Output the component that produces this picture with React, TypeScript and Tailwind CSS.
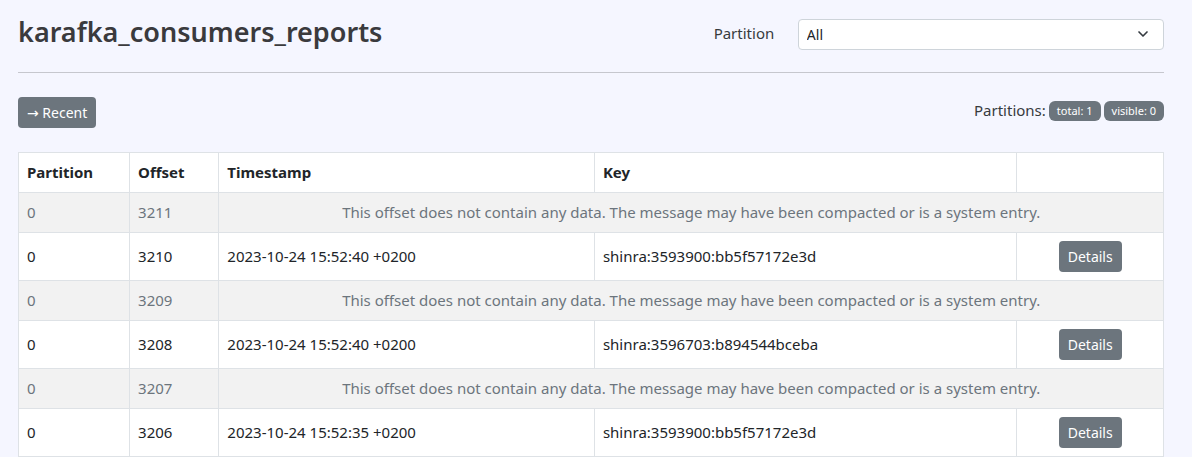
import { ChevronDown } from "lucide-react";

type Row = {
  partition: number;
  offset: number;
  timestamp?: string;
  messageKey?: string;
};

const rows: Row[] = [
  { partition: 0, offset: 3211 },
  { partition: 0, offset: 3210, timestamp: "2023-10-24 15:52:40 +0200", messageKey: "shinra:3593900:bb5f57172e3d" },
  { partition: 0, offset: 3209 },
  { partition: 0, offset: 3208, timestamp: "2023-10-24 15:52:40 +0200", messageKey: "shinra:3596703:b894544bceba" },
  { partition: 0, offset: 3207 },
  { partition: 0, offset: 3206, timestamp: "2023-10-24 15:52:35 +0200", messageKey: "shinra:3593900:bb5f57172e3d" },
];

const cell = "border border-[#dee2e6] p-2";

function MessageRow({ row }: { row: Row }) {
  if (!row.timestamp) {
    return (
      <tr className="bg-[#f2f2f2] text-[#6c757d]">
        <td className={cell}>{row.partition}</td>
        <td className={cell}>{row.offset}</td>
        <td className={`${cell} text-center`} colSpan={3}>
          This offset does not contain any data. The message may have been compacted or is a system entry.
        </td>
      </tr>
    );
  }
  return (
    <tr className="bg-white">
      <td className={cell}>{row.partition}</td>
      <td className={cell}>{row.offset}</td>
      <td className={cell}>{row.timestamp}</td>
      <td className={cell}>{row.messageKey}</td>
      <td className={`${cell} text-center`}>
        <a
          href={`#${row.partition}/${row.offset}`}
          className="inline-block rounded-sm bg-[#6c757d] px-[9px] py-[5px] align-top text-[14px] leading-[21px] text-white"
        >
          Details
        </a>
      </td>
    </tr>
  );
}

export default function App() {
  return (
    <main className="min-h-screen bg-[#f5f6ff] pr-7 pl-[18px] font-['Noto_Sans','Open_Sans',sans-serif] text-[15px] leading-[23px] text-[#373b3e]">
      <header className="flex items-start justify-between border-b border-[#c6c7ce] pt-3 pb-5">
        <h1 className="text-[27px] leading-10 font-semibold text-[#3a3a3d]">karafka_consumers_reports</h1>
        <div className="flex w-[39.3%] items-start justify-between pt-[7px]">
          <label htmlFor="partition" className="pt-[3px]">Partition</label>
          <div className="relative w-[81.3%]">
            <select
              id="partition"
              className="block h-[31px] w-full appearance-none rounded-sm border border-[#ced4da] bg-white px-2 text-[14px] text-[#212529]"
            >
              <option>All</option>
            </select>
            <ChevronDown
              className="pointer-events-none absolute top-[7px] right-[13px] size-4 text-[#343a40]"
              strokeWidth={2.5}
            />
          </div>
        </div>
      </header>

      <div className="flex items-start justify-between py-6">
        <a href="#recent" className="rounded-sm bg-[#6c757d] px-[9px] py-[5px] text-[14px] leading-[21px] text-white">
          <span className="font-['DejaVu_Sans',sans-serif] leading-none">→</span> Recent
        </a>
        <div className="flex items-center gap-[3px] pt-[2px]">
          <span>Partitions:</span>
          <span className="rounded-md bg-[#6c757d] px-2 text-[11px] leading-5 text-white">total: 1</span>
          <span className="rounded-md bg-[#6c757d] px-2 text-[11px] leading-5 text-white">visible: 0</span>
        </div>
      </div>

      <table className="w-full table-fixed border-collapse text-left text-[#212529]">
        <colgroup>
          <col className="w-[9.7%]" />
          <col className="w-[7.8%]" />
          <col className="w-[32.8%]" />
          <col className="w-[36.9%]" />
          <col className="w-[12.8%]" />
        </colgroup>
        <thead>
          <tr className="bg-white">
            <th className={cell}>Partition</th>
            <th className={cell}>Offset</th>
            <th className={cell}>Timestamp</th>
            <th className={cell}>Key</th>
            <td className={cell}></td>
          </tr>
        </thead>
        <tbody>
          {rows.map((row) => (
            <MessageRow key={row.offset} row={row} />
          ))}
        </tbody>
      </table>
    </main>
  );
}
